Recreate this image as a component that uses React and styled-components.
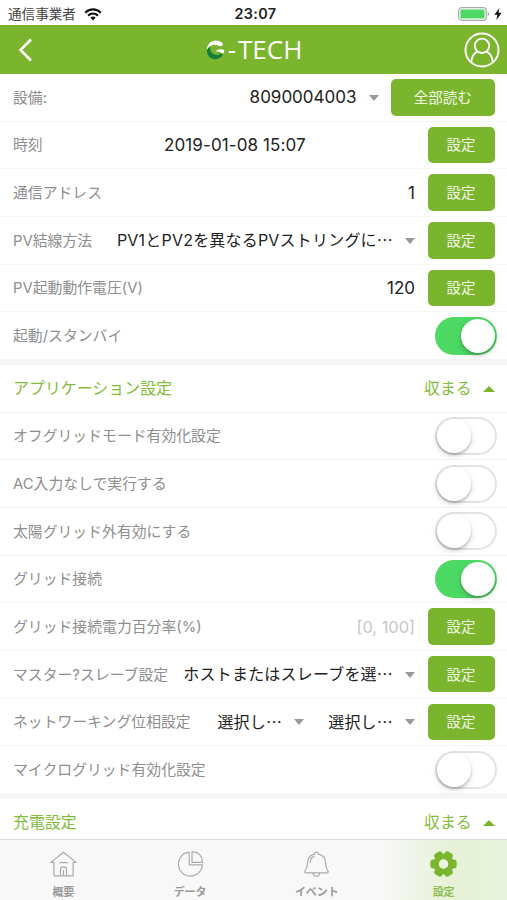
import React, { useState } from "react";
import styled, { createGlobalStyle } from "styled-components";

const GlobalStyle = createGlobalStyle`
    * {
        box-sizing: border-box;
    }
    body {
        margin: 0;
        background: #fff;
        font-family: Inter, "Noto Sans CJK JP", sans-serif;
        overflow: hidden;
    }
    button {
        font-family: inherit;
        border: none;
        padding: 0;
    }
`;

const Screen = styled.div`
    width: 507px;
    height: 900px;
    display: flex;
    flex-direction: column;
    overflow: hidden;
    background: #fff;
`;

const StatusBar = styled.div`
    height: 25px;
    flex: none;
    display: grid;
    grid-template-columns: 1fr auto 1fr;
    align-items: center;
    padding: 3px 5px 0 8px;
    color: #222;
`;

const Carrier = styled.div`
    display: flex;
    align-items: center;
    gap: 8px;
    font-size: 13.6px;
    line-height: 20px;
    color: #444;
`;

const Clock = styled.div`
    font-size: 14.4px;
    font-weight: 600;
    line-height: 20px;
    letter-spacing: 0.35px;
    margin-left: 1px;
`;

const Power = styled.div`
    display: flex;
    justify-content: flex-end;
    align-items: center;
    gap: 4px;
`;

const Header = styled.header`
    height: 49px;
    flex: none;
    display: grid;
    grid-template-columns: 1fr auto 1fr;
    align-items: center;
    padding: 0 7px 0 18px;
    background: #7ab52d;
`;

const Logo = styled.div`
    display: flex;
    align-items: center;
    gap: 3px;
    color: #fff;
    font-family: "Open Sans", sans-serif;
    font-size: 26px;
    line-height: 36px;
    margin-left: -10px;
`;

const LogoText = styled.span`
    display: flex;
    gap: 2px;
    margin-top: -1px;
`;

const UserIcon = styled.svg`
    justify-self: end;
`;

const Content = styled.main`
    flex: 1;
    min-height: 0;
    overflow: hidden;
`;

const Row = styled.div`
    height: 47.67px;
    display: flex;
    align-items: center;
    padding: 0 12.5px 0 13px;
    border-bottom: 1px solid #f5f5f5;
`;

const Divider = styled.div`
    height: 5px;
    background: #f6f6f6;
`;

const Label = styled.div`
    flex: none;
    padding-top: 1px;
    font-size: 14.85px;
    line-height: 22px;
    color: #8e8e8e;
    white-space: nowrap;
`;

const Value = styled.div`
    flex: 1;
    font-size: ${(props) => (props.$muted ? "16.4px" : "17px")};
    line-height: 24px;
    text-align: right;
    color: ${(props) => (props.$muted ? "#c7c7c7" : "#222")};
    white-space: nowrap;
`;

const DateValue = styled(Value)`
    padding-left: 12px;
    text-align: center;
    letter-spacing: 0.1px;
`;

const Selects = styled.div`
    flex: 1;
    display: flex;
    justify-content: flex-end;
    gap: 24px;
`;

const SelectBox = styled.div`
    display: flex;
    align-items: center;
    gap: 12px;
`;

const SelectText = styled.div`
    font-size: ${(props) => (props.$large ? "17px" : "16px")};
    line-height: 24px;
    color: #222;
    white-space: nowrap;
    margin-top: ${(props) => (props.$large ? "0" : "-1px")};
    letter-spacing: ${(props) => (props.$large ? "0" : "0.2px")};
`;

const Dots = styled.span`
    font-family: "Noto Sans CJK JP", sans-serif;
`;

const Caret = styled.span`
    width: 0;
    height: 0;
    margin-top: 1px;
    border-left: 5.5px solid transparent;
    border-right: 5.5px solid transparent;
    border-top: 6px solid #999;
`;

const CaretUp = styled.span`
    width: 0;
    height: 0;
    border-left: 6px solid transparent;
    border-right: 6px solid transparent;
    border-bottom: 6px solid #7ab52d;
`;

const SetButton = styled.button`
    flex: none;
    width: ${(props) => (props.$wide ? "103.5px" : "67px")};
    height: 36.5px;
    margin-left: 12.5px;
    padding-top: 1px;
    border-radius: 5px;
    background: #7ab52d;
    color: #f0f8e2;
    font-size: 14.5px;
    line-height: 22px;
`;

const Track = styled.button`
    flex: none;
    width: 62px;
    height: 38px;
    margin: 0 -2.5px 0 auto;
    padding: 2px;
    display: flex;
    justify-content: ${(props) => (props.$on ? "flex-end" : "flex-start")};
    border-radius: 19px;
    background: ${(props) => (props.$on ? "#4cd964" : "#fff")};
    box-shadow: ${(props) => (props.$on ? "none" : "inset 0 0 0 2px #e3e3e3")};
`;

const Thumb = styled.span`
    width: 34px;
    height: 34px;
    border-radius: 50%;
    background: #fff;
    box-shadow: 0 2px 3px rgba(0, 0, 0, 0.22), 0 3px 9px rgba(0, 0, 0, 0.1);
`;

const SectionTitle = styled.div`
    padding-top: 2px;
    font-size: 15.95px;
    line-height: 24px;
    color: #83bc3a;
`;

const Collapse = styled.button`
    display: flex;
    align-items: center;
    gap: 11px;
    margin-left: auto;
    padding-top: 2px;
    background: none;
    color: #83bc3a;
    font-size: 15.8px;
    line-height: 24px;
`;

const TabBar = styled.nav`
    flex: none;
    height: 61px;
    display: grid;
    grid-template-columns: repeat(4, 1fr);
    border-top: 1px solid #dcdcdc;
    background: #f8f8f8;
`;

const Tab = styled.div`
    display: flex;
    flex-direction: column;
    align-items: center;
    padding-top: 11px;
    gap: 7px;
    font-size: 11px;
    font-weight: 700;
    line-height: 16px;
    color: ${(props) => (props.$active ? "#8abd4b" : "#999")};
    background: ${(props) =>
        props.$active ? "linear-gradient(90deg, #f8f8f8 0%, #e6f1d6 55%, #e8f2da 100%)" : "none"};
`;

function WifiIcon() {
    return (
        <svg width="18" height="13" viewBox="0 0 18 13" fill="none" stroke="#111" strokeWidth="2.2">
            <path d="M1.2 4.7C5.6.2 12.4.2 16.8 4.7" />
            <path d="M4.1 7.6c2.8-2.8 7-2.8 9.8 0" />
            <path d="M6.3 9.7c1.6-1.5 3.8-1.5 5.4 0L9 12.5z" fill="#111" stroke="none" />
        </svg>
    );
}

function BatteryIcon() {
    return (
        <svg width="32" height="14" viewBox="0 0 32 14">
            <rect x=".7" y=".7" width="27.6" height="12.6" rx="3" fill="#fff" stroke="#aaa" strokeWidth="1.2" />
            <rect x="2.4" y="2.4" width="24.2" height="9.2" rx="1.3" fill="#4cd964" />
            <path d="M29.7 4.8q1.6.6 1.6 2.2t-1.6 2.2z" fill="#aaa" />
        </svg>
    );
}

function LogoMark() {
    return (
        <svg width="19" height="20" viewBox="0 0 19 20">
            <path d="M.9 9.8C.9 4.200 5.200.5 9.800.5c3.800 0 6.600 1.700 7.400 4.300-1.200 1.500-3.200 1.700-4.900.8C8.600 3.600 3.600 5.400.9 9.800z" fill="#fff" />
            <path d="M9.600 11.200c1.800-2 5-2.600 8.700-1.200.1 1.600-.6 3-1.700 3.900-1.500-1.700-4-2.600-7-2.700z" fill="#fff" />
            <path d="M.9 10.800c.8-2.200 1.900-3.600 3.300-4.600-.6 5 2.600 8.700 6.600 8.700 2 0 3.700-.7 4.700-1.900l1.400 1.300c-1.700 3.200-4.500 5-8 5C4.400 19.300 1 15.700.9 10.800z" fill="#137f3a" />
        </svg>
    );
}

function GearIcon() {
    const teeth = [30, 90, 150, 210, 270, 330];
    return (
        <svg width="27" height="26" viewBox="-13.5 -13 27 26">
            {teeth.map((angle) => (
                <rect key={angle} x="-4.5" y="-13.2" width="9" height="9" rx="3.2" fill="#7ab52d" transform={`rotate(${angle})`} />
            ))}
            <circle r="7.5" fill="none" stroke="#7ab52d" strokeWidth="5.6" />
            <circle r="4.7" fill="#eaf4dc" />
        </svg>
    );
}

function HomeIcon() {
    return (
        <svg width="27" height="26" viewBox="0 0 27 26" fill="none" stroke="#aaa" strokeWidth="1.2" strokeLinejoin="round">
            <path d="M13.5 1.2L.9 11.4h3v13.4h19.2V11.4h3z" />
            <path d="M9.3 11.6h8.4M10.5 24.6v-6.2c0-1.6 1.2-2.6 3-2.6s3 1 3 2.6v6.2M13.5 19v5.6" />
        </svg>
    );
}

function PieIcon() {
    return (
        <svg width="27" height="26" viewBox="0 0 27 26" fill="none" stroke="#aaa" strokeWidth="1.2" strokeLinejoin="round">
            <path d="M12.200 1.200A12 12 0 1 0 25.400 13.800H12.200z" />
            <path d="M15 .9h1.400a9.500 9.500 0 0 1 9 9v1.400H15z" />
        </svg>
    );
}

function BellIcon() {
    return (
        <svg width="27" height="26" viewBox="0 0 27 26" fill="none" stroke="#aaa" strokeWidth="1.2" strokeLinejoin="round" strokeLinecap="round">
            <path d="M11.500 3.200a2 2 0 0 1 4 0c4.200 1 7 4.300 7 8.600 0 4 .4 5.600 2.300 7.800.9 1.200.4 2.200-.8 2.200H3c-1.200 0-1.700-1-.8-2.200 1.900-2.200 2.300-3.800 2.300-7.800 0-4.300 2.800-7.600 7-8.600z" />
            <path d="M10.200 22c.2 4.200 6.400 4.200 6.600 0M7.200 11.200c.1-3 1.500-5 3.800-5.800" />
        </svg>
    );
}

function Toggle({ defaultOn }) {
    const [on, setOn] = useState(!!defaultOn);
    return (
        <Track $on={on} onClick={() => setOn(!on)}>
            <Thumb />
        </Track>
    );
}

function Select({ text, large }) {
    return (
        <SelectBox>
            <SelectText $large={large}>
                {text}
                {!large && <Dots>…</Dots>}
            </SelectText>
            <Caret />
        </SelectBox>
    );
}

function SwitchRow({ label, on }) {
    return (
        <Row>
            <Label>{label}</Label>
            <Toggle defaultOn={on} />
        </Row>
    );
}

function SectionRow({ title }) {
    return (
        <Row>
            <SectionTitle>{title}</SectionTitle>
            <Collapse>
                収まる
                <CaretUp />
            </Collapse>
        </Row>
    );
}

function App() {
    return (
        <Screen>
            <GlobalStyle />
            <StatusBar>
                <Carrier>
                    通信事業者
                    <WifiIcon />
                </Carrier>
                <Clock>23:07</Clock>
                <Power>
                    <BatteryIcon />
                    <svg width="8" height="12" viewBox="0 0 8 12">
                        <path d="M5.4 0L.4 6.8h2.900L2.400 12l5.200-7.200H4.500z" fill="#111" />
                    </svg>
                </Power>
            </StatusBar>

            <Header>
                <svg width="15" height="24" viewBox="0 0 15 24" fill="none" stroke="#fff" strokeWidth="2.6">
                    <path d="M13 1.5L2.500 12 13 22.500" />
                </svg>
                <Logo>
                    <LogoMark />
                    <LogoText>
                        <span>-</span>
                        <span>TECH</span>
                    </LogoText>
                </Logo>
                <UserIcon width="36" height="36" viewBox="0 0 36 36" fill="none" stroke="#fff" strokeWidth="1.9">
                    <circle cx="18" cy="18" r="16.5" />
                    <circle cx="18" cy="13.8" r="7.2" />
                    <path d="M7.200 30.400c.6-6 3.400-9.800 7-11.200M28.800 30.400c-.6-6-3.400-9.800-7-11.200" />
                </UserIcon>
            </Header>

            <Content>
                <Row>
                    <Label>設備:</Label>
                    <Selects>
                        <Select text="8090004003" large />
                    </Selects>
                    <SetButton $wide>全部読む</SetButton>
                </Row>
                <Row>
                    <Label>時刻</Label>
                    <DateValue>2019-01-08 15:07</DateValue>
                    <SetButton>設定</SetButton>
                </Row>
                <Row>
                    <Label>通信アドレス</Label>
                    <Value>1</Value>
                    <SetButton>設定</SetButton>
                </Row>
                <Row>
                    <Label>PV結線方法</Label>
                    <Selects>
                        <Select text="PV1とPV2を異なるPVストリングに" />
                    </Selects>
                    <SetButton>設定</SetButton>
                </Row>
                <Row>
                    <Label>PV起動動作電圧(V)</Label>
                    <Value>120</Value>
                    <SetButton>設定</SetButton>
                </Row>
                <SwitchRow label="起動/スタンバイ" on />

                <Divider />
                <SectionRow title="アプリケーション設定" />
                <SwitchRow label="オフグリッドモード有効化設定" />
                <SwitchRow label="AC入力なしで実行する" />
                <SwitchRow label="太陽グリッド外有効にする" />
                <SwitchRow label="グリッド接続" on />
                <Row>
                    <Label>グリッド接続電力百分率(%)</Label>
                    <Value $muted>[0, 100]</Value>
                    <SetButton>設定</SetButton>
                </Row>
                <Row>
                    <Label>マスター?スレーブ設定</Label>
                    <Selects>
                        <Select text="ホストまたはスレーブを選" />
                    </Selects>
                    <SetButton>設定</SetButton>
                </Row>
                <Row>
                    <Label>ネットワーキング位相設定</Label>
                    <Selects>
                        <Select text="選択し" />
                        <Select text="選択し" />
                    </Selects>
                    <SetButton>設定</SetButton>
                </Row>
                <SwitchRow label="マイクログリッド有効化設定" />

                <Divider />
                <SectionRow title="充電設定" />
            </Content>

            <TabBar>
                <Tab>
                    <HomeIcon />
                    概要
                </Tab>
                <Tab>
                    <PieIcon />
                    データ
                </Tab>
                <Tab>
                    <BellIcon />
                    イベント
                </Tab>
                <Tab $active>
                    <GearIcon />
                    設定
                </Tab>
            </TabBar>
        </Screen>
    );
}

export default App;
